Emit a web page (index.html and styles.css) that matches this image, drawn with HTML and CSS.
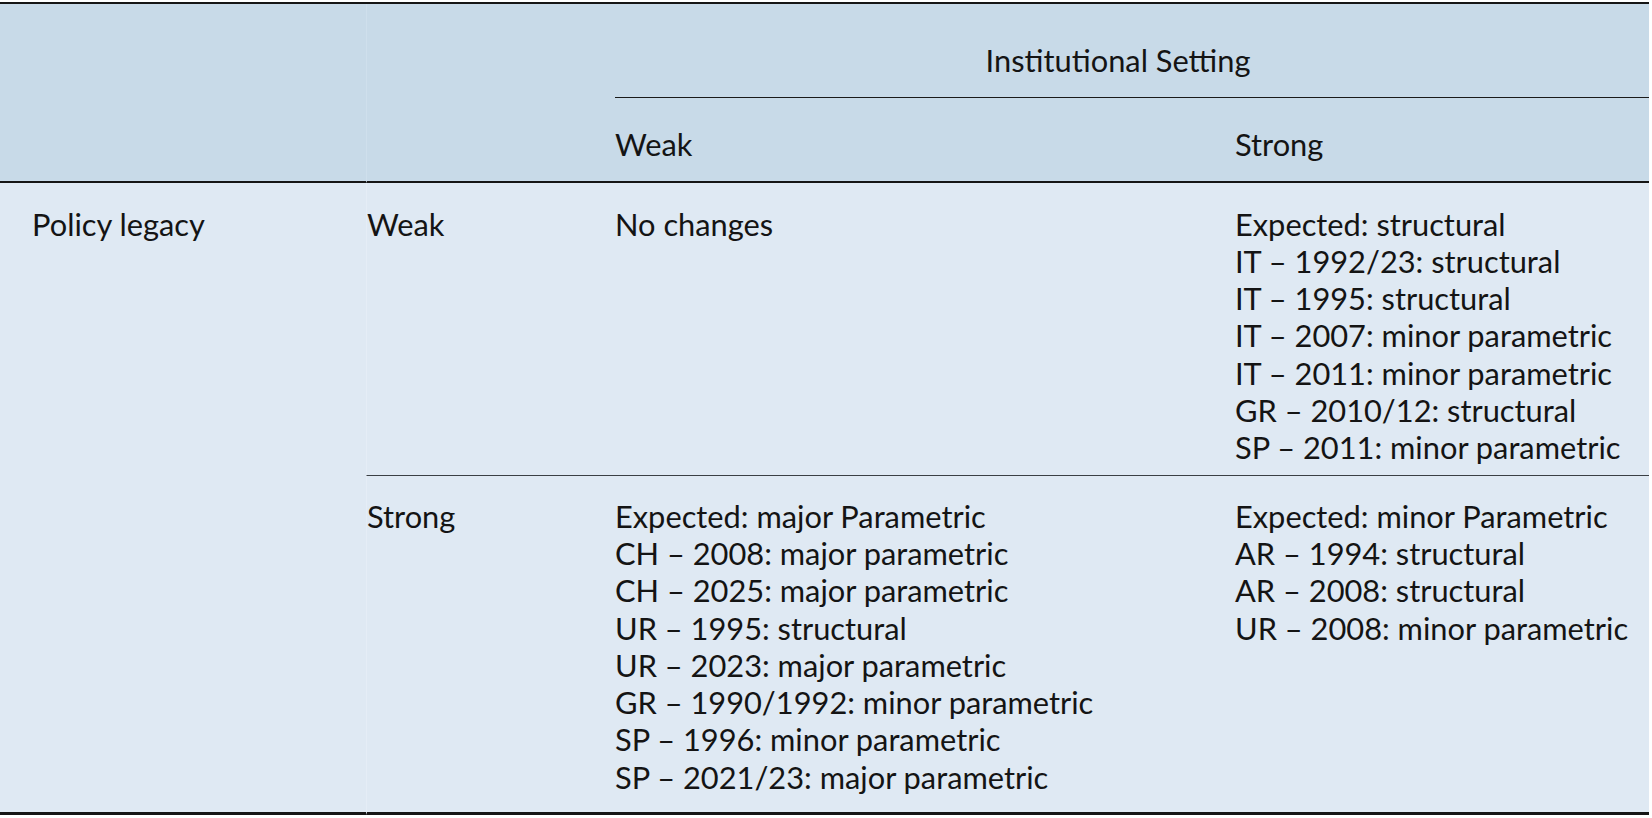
FILE: index.html
```html
<!DOCTYPE html>
<html lang="en">
<head>
<meta charset="utf-8">
<title>Institutional Setting and Policy legacy</title>
<link rel="stylesheet" href="styles.css">
</head>
<body>
<table class="tbl">
  <colgroup>
    <col class="c1"><col class="c2"><col class="c3"><col class="c4">
  </colgroup>
  <thead>
    <tr class="hr1">
      <th class="first"></th>
      <th class="sep"></th>
      <th class="span" colspan="2">Institutional Setting</th>
    </tr>
    <tr class="hr2">
      <th class="first"></th>
      <th class="sep"></th>
      <th>Weak</th>
      <th>Strong</th>
    </tr>
  </thead>
  <tbody>
    <tr class="br1">
      <td class="first last" rowspan="2">Policy legacy</td>
      <td class="sep">Weak</td>
      <td>No changes</td>
      <td>
        <div>Expected: structural</div>
        <div>IT – 1992/23: structural</div>
        <div>IT – 1995: structural</div>
        <div>IT – 2007: minor parametric</div>
        <div>IT – 2011: minor parametric</div>
        <div>GR – 2010/12: structural</div>
        <div>SP – 2011: minor parametric</div>
      </td>
    </tr>
    <tr class="br2">
      <td class="sep last">Strong</td>
      <td class="last">
        <div>Expected: major Parametric</div>
        <div>CH – 2008: major parametric</div>
        <div>CH – 2025: major parametric</div>
        <div>UR – 1995: structural</div>
        <div>UR – 2023: major parametric</div>
        <div>GR – 1990/1992: minor parametric</div>
        <div>SP – 1996: minor parametric</div>
        <div>SP – 2021/23: major parametric</div>
      </td>
      <td class="last">
        <div>Expected: minor Parametric</div>
        <div>AR – 1994: structural</div>
        <div>AR – 2008: structural</div>
        <div>UR – 2008: minor parametric</div>
      </td>
    </tr>
  </tbody>
</table>
</body>
</html>
```

FILE: styles.css
```css
html, body {
  margin: 0;
  padding: 0;
  background: #ffffff;
}

body {
  font-family: "Lato", "Liberation Sans", sans-serif;
  font-size: 30.8px;
  line-height: 37.3px;
  color: #141414;
}

.tbl {
  margin-top: 2px;
  width: 1649px;
  table-layout: fixed;
  border-collapse: separate;
  border-spacing: 0;
  border-top: 2px solid #151515;
}

.c1 { width: 366px; }
.c2 { width: 249px; }
.c3 { width: 620px; }
.c4 { width: 414px; }

th, td {
  padding: 0;
  text-align: left;
  vertical-align: top;
  font-weight: 400;
  white-space: nowrap;
}

th {
  background: #c8dae8;
}

td {
  background: #dfe9f3;
}

th.sep {
  border-left: 1px solid #cfdfec;
}

td.sep {
  border-left: 1px solid #e5edf6;
}

th.first, td.first {
  padding-left: 32px;
}

.hr1 th {
  padding-top: 38px;
  padding-bottom: 18px;
}

.hr1 th.span {
  text-align: center;
  padding-right: 28px;
  border-bottom: 1px solid #1a1a1a;
}

.hr2 th {
  padding-top: 28px;
  padding-bottom: 17px;
  border-bottom: 2px solid #151515;
}

.br1 td {
  padding-top: 23px;
  padding-bottom: 8px;
}

.br2 td {
  padding-top: 22px;
  padding-bottom: 16px;
  border-top: 1px solid #3a3f44;
}

td.last {
  border-bottom: 3px solid #151515;
}
```
